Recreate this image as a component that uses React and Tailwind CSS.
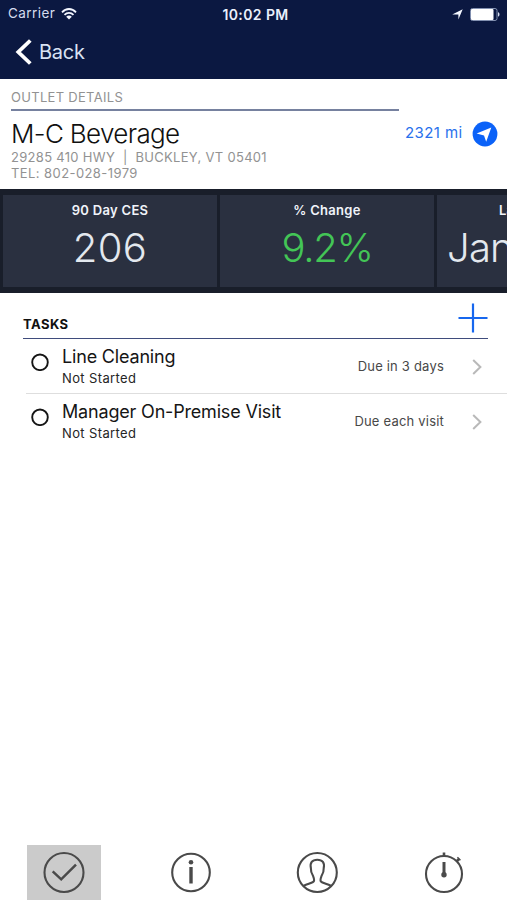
import React from "react";

function StatusBar() {
  return (
    <div className="grid h-7 grid-cols-3 items-center pl-2 pr-[7px] text-[13.5px] leading-none text-[#d5dcee]">
      <div className="flex items-center gap-[6px]">
        <span className="tracking-[0.45px]">Carrier</span>
        <svg width="16" height="12" viewBox="0 0 16 12" fill="none" stroke="#f4f7ff" strokeWidth="1.8">
          <path d="M1 4.3C5-.1 11-.1 15 4.3" />
          <path d="M3.5 6.8c2.6-2.7 6.4-2.7 9 0" />
          <path d="M8 11.5 5.2 8.7c1.6-1.5 4-1.5 5.6 0Z" fill="#f4f7ff" stroke="none" />
        </svg>
      </div>
      <span className="whitespace-nowrap pl-[3px] pt-px text-center text-[14px] font-semibold tracking-[0.4px] text-[#eaf0fc]">10:02 PM</span>
      <div className="flex items-center justify-end gap-[7px]">
        <svg width="11" height="11" viewBox="0 0 11 11" fill="#f4f7ff">
          <path d="M10.7.3 6.4 10.5V5.4H.2Z" />
        </svg>
        <svg width="30" height="13" viewBox="0 0 30 13">
          <rect x=".5" y=".5" width="26.5" height="12" rx="2" fill="none" stroke="#8290b0" />
          <rect x="1" y="1" width="22.5" height="11" rx="1" fill="#fff" />
          <path d="M28 4.3c2 .6 2 3.8 0 4.4Z" fill="#d5dcee" />
        </svg>
      </div>
    </div>
  );
}

function Metric({ label, value, tone = "text-[#e3e8ee] tracking-[0.4px]" }) {
  return (
    <div className="flex h-[92px] w-[214px] shrink-0 flex-col items-center bg-[#2a3040] whitespace-nowrap">
      <div className="mt-[5px] h-5 text-[13px] font-semibold leading-5 tracking-[0.3px] text-[#f1f4fa]">{label}</div>
      <div className={"mt-[4px] h-12 text-[40px] font-[350] leading-[48px] " + tone}>{value}</div>
    </div>
  );
}

function Task({ title, due, last }) {
  return (
    <div className={"ml-[26px] flex h-[55px] pl-[5px] " + (last ? "" : "border-b border-[#dedede]")}>
      <svg className="mt-[14px] shrink-0" width="18" height="18" viewBox="0 0 18 18" fill="none" stroke="#151515" strokeWidth="1.9">
        <circle cx="9" cy="9.3" r="7.8" />
      </svg>
      <div className="ml-[13px] flex-1 whitespace-nowrap">
        <div className="mt-[6px] h-6 text-[18px] leading-6 tracking-[-0.18px] text-[#151515]">{title}</div>
        <div className="h-[18px] text-[13px] leading-[18px] tracking-[0.38px] text-[#252525]">Not Started</div>
      </div>
      <div className="mt-[17px] h-5 text-[13px] leading-5 tracking-[0.2px] text-[#484848]">{due}</div>
      <svg className="ml-7 mr-6 mt-[20px] shrink-0" width="11" height="16" viewBox="0 0 11 16" fill="none" stroke="#b9b9b9" strokeWidth="2">
        <path d="m1.2 1 7.2 7-7.2 7" />
      </svg>
    </div>
  );
}

function TabBar() {
  const s = { width: 44, height: 44, viewBox: "0 0 44 44", fill: "none", stroke: "#4a4a4a", strokeWidth: 2.1 };
  return (
    <nav className="mt-auto flex h-[55px] pl-[27px]">
      <div className="flex w-[74px] justify-center bg-[#cbcbcb] pt-[5px]">
        <svg {...s}>
          <circle cx="22" cy="22.5" r="19.5" />
          <path d="m10.7 21.3 8.5 8L34 14.7" strokeWidth="2.5" />
        </svg>
      </div>
      <div className="ml-[52.5px] flex w-[74px] justify-center pt-[5px]">
        <svg {...s}>
          <circle cx="22" cy="22.5" r="18.8" />
          <circle cx="22" cy="12.2" r="2.3" fill="#4a4a4a" stroke="none" />
          <path d="M22 17v16.5" strokeWidth="3.4" />
        </svg>
      </div>
      <div className="ml-[52.5px] flex w-[74px] justify-center pt-[5px]">
        <svg {...s}>
          <circle cx="22.3" cy="22.5" r="19.5" />
          <path d="M8.7 35.7c4-1.7 7.2-2.6 9.4-3.7 1.5-1 .9-3.8.1-5.7-1.6-2.7-2.6-4.9-2.3-8-1.2-5.6 1.2-8.6 6.4-8.6s7.6 3 6.4 8.6c.3 3.1-.7 5.3-2.3 8-.8 1.9-1.4 4.7.1 5.7 2.2 1.1 5.4 2 9.4 3.7" />
        </svg>
      </div>
      <div className="ml-[52.5px] flex w-[74px] justify-center pt-[5px]">
        <svg {...s}>
          <circle cx="22" cy="24" r="18" />
          <path d="M22 6V2.4M34.5 11.5l2.8-2.8" strokeWidth="2.6" />
          <path d="m35.4 7.3 3 3" strokeWidth="1.5" />
          <path d="M22 12v12" strokeWidth="3" />
          <circle cx="22" cy="24.8" r="2.7" fill="#4a4a4a" stroke="none" />
        </svg>
      </div>
    </nav>
  );
}

export default function App() {
  return (
    <div className="flex h-[900px] w-[507px] flex-col overflow-hidden bg-white font-['Inter','Liberation_Sans',sans-serif]">
      <header className="h-[79px] shrink-0 bg-[#0b1841]">
        <StatusBar />
        <div className="flex h-12 items-center pl-[15px]">
          <svg width="18" height="26" viewBox="0 0 18 26" fill="none" stroke="#fff" strokeWidth="3.8">
            <path d="M15.3 1.5 3.3 13l12 11.5" />
          </svg>
          <span className="ml-[6px] text-[20px] leading-6 tracking-[-0.25px] text-[#d9e2f3]">Back</span>
        </div>
      </header>

      <section className="flex h-[110px] shrink-0 pl-[11px]">
        <div className="w-[388px] whitespace-nowrap">
          <div className="h-8 border-b-2 border-[#76819f] pt-2 text-[13px] leading-5 tracking-[0.3px] text-[#929292]">OUTLET DETAILS</div>
          <h1 className="mt-[7px] h-8 text-[26px] font-light leading-8 tracking-[-0.65px] text-[#101010]">M-C Beverage</h1>
          <div className="-mt-px h-4 text-[13px] leading-4 tracking-[0.3px] whitespace-pre text-[#929292]">{"29285 410 HWY  |  BUCKLEY, VT 05401"}</div>
          <div className="h-4 text-[13px] leading-4 tracking-[0.42px] text-[#929292]">TEL: 802-028-1979</div>
        </div>
        <div className="ml-[6px] mt-[42px] flex h-[25px] items-center whitespace-nowrap text-[15px] tracking-[0.4px] text-[#2870ec]">
          <span className="w-[67px]">2321 mi</span>
          <svg width="26" height="26" viewBox="0 0 26 26">
            <circle cx="13" cy="13" r="12.4" fill="#0b62f8" />
            <path d="M19.3 6.5 14.2 20.8 12 14.6 4.6 12.6Z" fill="#fff" />
          </svg>
        </div>
      </section>

      <section className="flex h-[104px] shrink-0 gap-[3px] overflow-hidden bg-[#191e2a] pl-[3px] pt-[6px]">
        <Metric label="90 Day CES" value="206" />
        <Metric label="% Change" value="9.2%" tone="text-[#43c556] tracking-[-1.3px]" />
        <Metric label="Last Delivery:" value="Jan 10, 17" tone="text-[#e3e8ee] tracking-[-0.8px] self-start pl-[10px]" />
      </section>

      <section className="shrink-0">
        <div className="ml-[23px] mr-[19px] flex h-[46px] items-start justify-between border-b border-[#3f4c7c]">
          <h2 className="mt-[21px] text-[13px] font-bold leading-5 tracking-[0.45px] text-[#111]">TASKS</h2>
          <svg className="mt-[10px]" width="30" height="30" viewBox="0 0 30 30" stroke="#1767ee" strokeWidth="2.2">
            <path d="M15 .5v29M.5 15h29" />
          </svg>
        </div>
        <Task title="Line Cleaning" due="Due in 3 days" />
        <Task title="Manager On-Premise Visit" due="Due each visit" last />
      </section>

      <TabBar />
    </div>
  );
}
